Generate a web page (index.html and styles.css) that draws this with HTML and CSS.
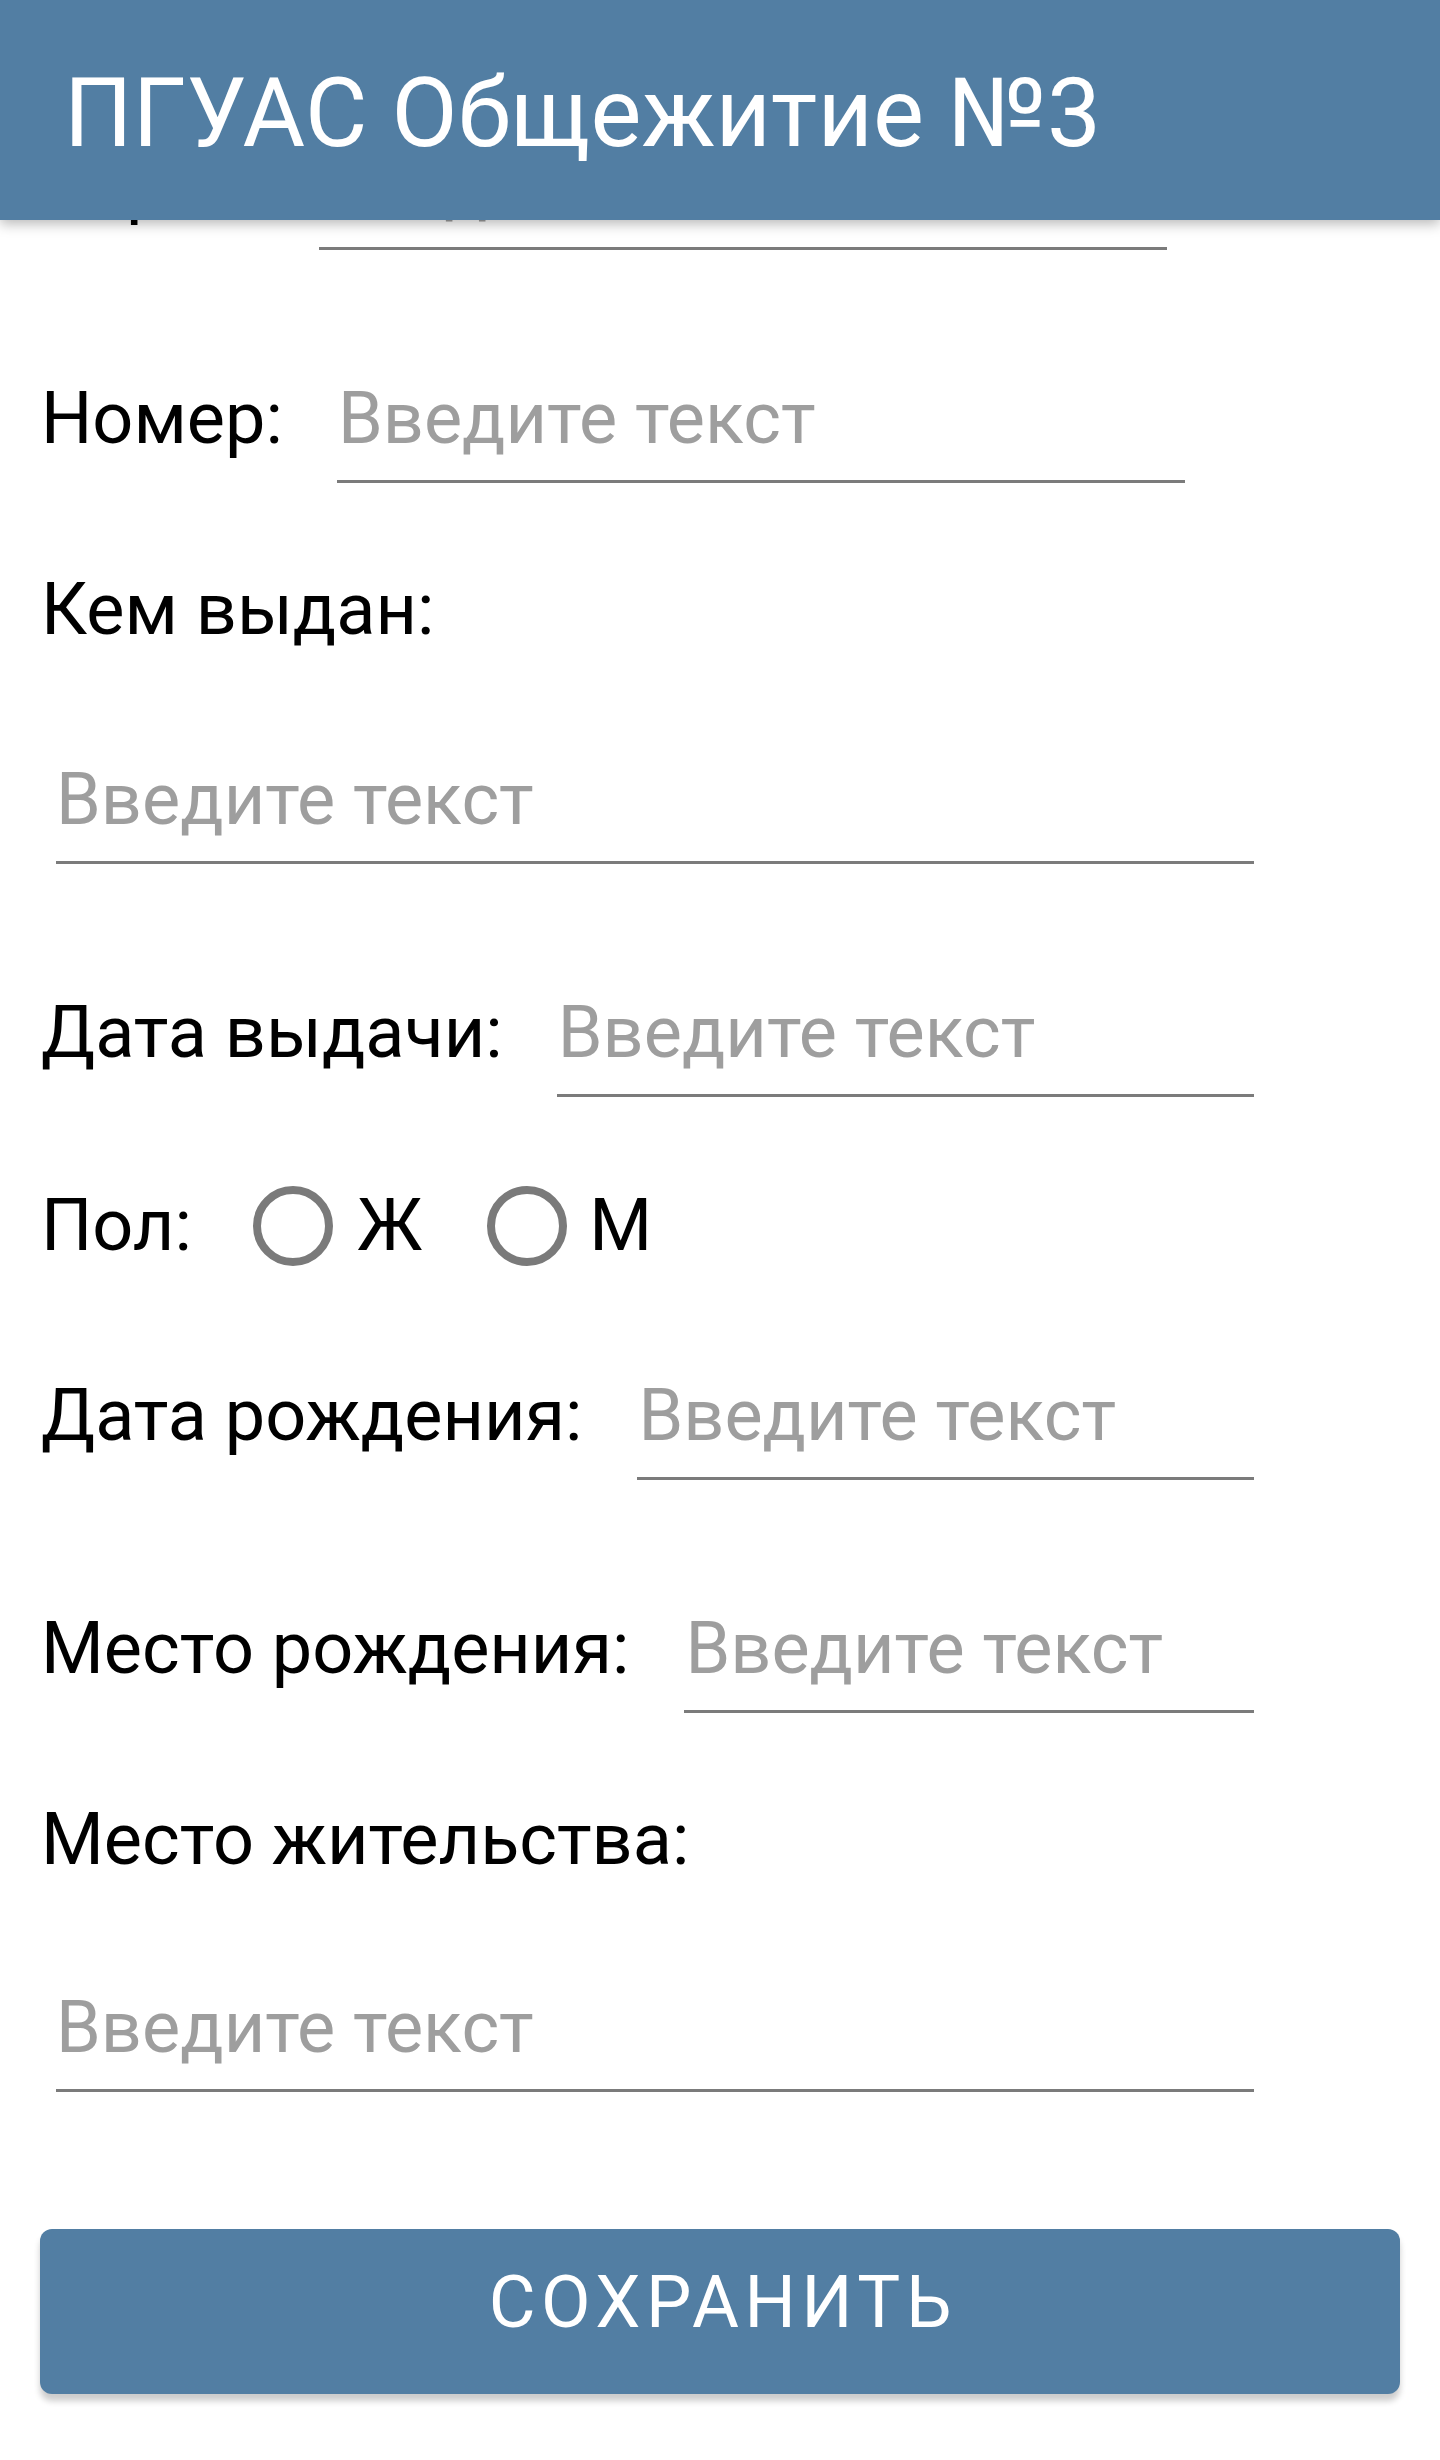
FILE: index.html
```html
<!DOCTYPE html>
<html lang="ru">
<head>
<meta charset="utf-8">
<title>ПГУАС Общежитие №3</title>
<link rel="stylesheet" href="styles.css">
</head>
<body>
<header class="appbar">
  <h1 class="appbar-title">ПГУАС Общежитие №3</h1>
</header>
<main class="page">
  <section class="fields">
    <div class="row row-first">
      <span class="label">Серия:</span>
      <div class="field field-fixed field-seria"><span class="ph">Введите текст</span></div>
    </div>
    <div class="row gap-lg">
      <span class="label">Номер:</span>
      <div class="field field-fixed field-nomer"><span class="ph">Введите текст</span></div>
    </div>
    <div class="label label-line gap-sm">Кем выдан:</div>
    <div class="field field-full gap-md"><span class="ph">Введите текст</span></div>
    <div class="row gap-lg">
      <span class="label">Дата выдачи:</span>
      <div class="field field-grow"><span class="ph">Введите текст</span></div>
    </div>
    <div class="row radio-row gap-sm">
      <span class="label">Пол:</span>
      <div class="option option-first">
        <span class="radio"></span>
        <span class="option-text option-text-f">Ж</span>
      </div>
      <div class="option option-second">
        <span class="radio"></span>
        <span class="option-text option-text-m">М</span>
      </div>
    </div>
    <div class="row gap-md">
      <span class="label">Дата рождения:</span>
      <div class="field field-grow field-wide-gap"><span class="ph">Введите текст</span></div>
    </div>
    <div class="row gap-lg">
      <span class="label">Место рождения:</span>
      <div class="field field-grow field-wide-gap"><span class="ph">Введите текст</span></div>
    </div>
    <div class="label label-line gap-sm">Место жительства:</div>
    <div class="field field-full gap-md-last"><span class="ph">Введите текст</span></div>
  </section>
  <div class="actions">
    <button class="btn" type="button">СОХРАНИТЬ</button>
  </div>
</main>
</body>
</html>
```

FILE: styles.css
```css
* {
  box-sizing: border-box;
}

html, body {
  margin: 0;
  padding: 0;
  background: #ffffff;
}

body {
  font-family: Roboto, "Noto Sans", "Liberation Sans", sans-serif;
  color: #000000;
  width: 1440px;
  min-height: 2460px;
}

.appbar {
  position: fixed;
  top: 0;
  left: 0;
  width: 1440px;
  height: 220px;
  background: #527ea3;
  padding: 57px 0 0 64px;
  box-shadow: 0 4px 12px rgba(0, 0, 0, 0.28);
  z-index: 10;
}

.appbar-title {
  margin: 0;
  font-family: Roboto, "Noto Sans", sans-serif;
  font-weight: 400;
  font-size: 96px;
  line-height: 112px;
  letter-spacing: 0.2px;
  color: #ffffff;
  white-space: nowrap;
}

.page {
  padding-top: 144px;
}

.fields {
  padding: 0 186px 0 41px;
}

.row {
  display: flex;
  align-items: flex-start;
}

.label {
  font-size: 72px;
  line-height: 84px;
  color: #000000;
  white-space: nowrap;
}

.label-line {
  display: block;
}

.field {
  font-size: 72px;
  line-height: 84px;
  padding: 0 0 19px 0;
  border-bottom: 3px solid #7b7b7b;
  white-space: nowrap;
  text-indent: 1px;
}

.ph {
  color: #9e9e9e;
}

.field-fixed {
  width: 848px;
  flex: none;
}

.field-seria {
  margin-left: 54px;
}

.field-nomer {
  margin-left: 54px;
}

.field-grow {
  flex: 1;
  margin-left: 54px;
}

.field-wide-gap {
  margin-left: 55px;
}

.field-full {
  margin-left: 15px;
  text-indent: 0;
}

.gap-lg {
  margin-top: 127px;
}

.gap-sm {
  margin-top: 85px;
}

.radio-row.gap-sm {
  margin-top: 87px;
  align-items: center;
}

.gap-md {
  margin-top: 106px;
}

.gap-md-last {
  margin-top: 104px;
}

.option {
  display: flex;
  align-items: center;
}

.option-first {
  margin-left: 61px;
}

.option-second {
  margin-left: 65px;
}

.radio {
  width: 80px;
  height: 80px;
  border: 8px solid #7a7a7a;
  border-radius: 50%;
  flex: none;
}

.option-text {
  font-size: 72px;
  line-height: 84px;
  color: #000000;
}

.option-text-f {
  margin-left: 24px;
}

.option-text-m {
  margin-left: 22px;
}

.actions {
  margin-top: 137px;
  padding: 0 40px;
}

.btn {
  display: block;
  width: 100%;
  height: 165px;
  border: none;
  border-radius: 12px;
  background: #527ea3;
  color: #ffffff;
  font-family: Roboto, "Noto Sans", sans-serif;
  font-weight: 400;
  font-size: 72px;
  line-height: 84px;
  letter-spacing: 5.5px;
  padding: 0 0 18px 5.5px;
  text-align: center;
  box-shadow: 0 7px 6px rgba(0, 0, 0, 0.2);
  vertical-align: top;
}
```
